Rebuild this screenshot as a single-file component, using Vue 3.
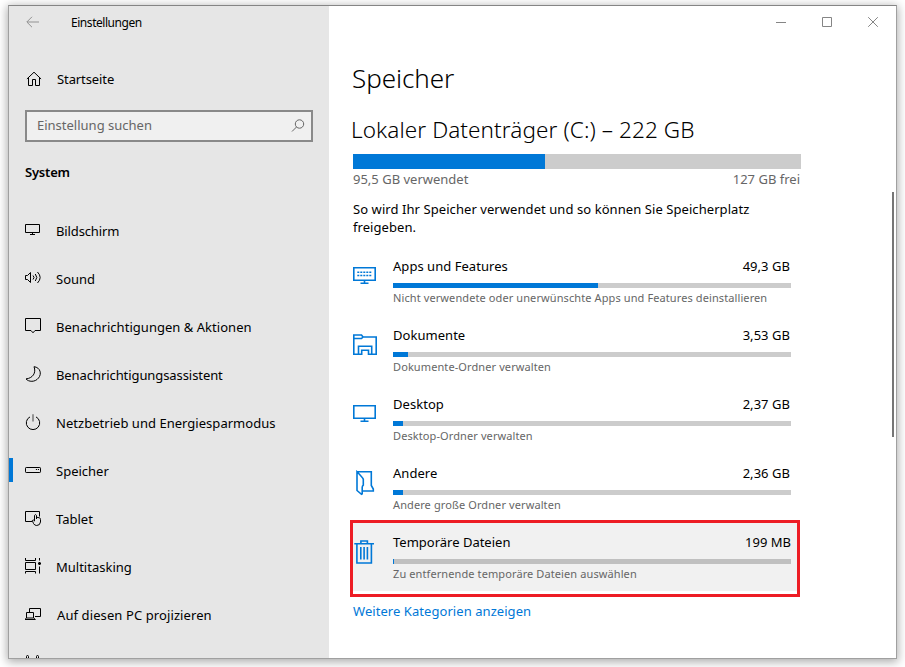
<script setup>
const nav = [
  { id: 'display', label: 'Bildschirm' },
  { id: 'sound', label: 'Sound' },
  { id: 'message', label: 'Benachrichtigungen & Aktionen' },
  { id: 'moon', label: 'Benachrichtigungsassistent' },
  { id: 'power', label: 'Netzbetrieb und Energiesparmodus' },
  { id: 'drive', label: 'Speicher', active: true },
  { id: 'tablet', label: 'Tablet' },
  { id: 'tasks', label: 'Multitasking' },
  { id: 'project', label: 'Auf diesen PC projizieren' },
  { id: 'share', label: '' },
]

const categories = [
  { id: 'apps', name: 'Apps und Features', size: '49,3 GB', used: 205, hint: 'Nicht verwendete oder unerwünschte Apps und Features deinstallieren' },
  { id: 'docs', name: 'Dokumente', size: '3,53 GB', used: 15, hint: 'Dokumente-Ordner verwalten' },
  { id: 'desktop', name: 'Desktop', size: '2,37 GB', used: 10, hint: 'Desktop-Ordner verwalten' },
  { id: 'other', name: 'Andere', size: '2,36 GB', used: 10, hint: 'Andere große Ordner verwalten' },
  { id: 'temp', name: 'Temporäre Dateien', size: '199 MB', used: 1, hint: 'Zu entfernende temporäre Dateien auswählen', marked: true },
]
</script>

<template>
  <div class="desktop">
    <div class="window">
      <aside class="sidebar">
        <header class="titlebar">
          <svg class="back" width="14" height="12" viewBox="0 0 14 12"><path d="M13 6H1M6 .8L.8 6L6 11.2" /></svg>
          <span class="apptitle">Einstellungen</span>
        </header>
        <div class="home">
          <svg width="16" height="16" viewBox="0 0 16 16"><path d="M.9 8L8 1.2L15.1 8M2.5 6.5V14.5H6.5V8.5H9.5V14.5H13.5V6.5" /></svg>
          <span>Startseite</span>
        </div>
        <div class="search">
          <span>Einstellung suchen</span>
          <svg width="14" height="14" viewBox="0 0 14 14"><circle cx="8.5" cy="5" r="4.2" /><path d="M5.5 8L1 12.5" /></svg>
        </div>
        <h3>System</h3>
        <nav>
          <div v-for="n in nav" :key="n.id" class="item" :class="{ active: n.active }">
            <svg width="18" height="18" viewBox="0 0 18 18">
              <template v-if="n.id === 'display'"><path d="M.5 2.5H14.5V10.5H.5zM7.5 10.5V12.5M5 12.5H10" /></template>
              <template v-else-if="n.id === 'sound'"><path d="M.5 5.5H2.5L5.5 2.5V12.5L2.5 9.5H.5z" /><path d="M8 5.5Q10 7.5 8 9.5M10.3 4Q13.3 7.5 10.3 11M12.5 2Q17.8 7.5 12.5 13" /></template>
              <template v-else-if="n.id === 'message'"><path d="M.5 .5H15.5V12.5H10L8 14.8L6 12.5H.5z" /></template>
              <template v-else-if="n.id === 'moon'"><path d="M9 .7C15.4 1.4 17 8 13.5 12C10 16.5 3.5 16 1 12.9C7.5 12.3 11.5 7 9 .7z" /></template>
              <template v-else-if="n.id === 'power'"><path d="M5 2.9A6.7 6.7 0 1 0 11 2.9" /><path class="grey" d="M8 .2V7.5" /></template>
              <template v-else-if="n.id === 'drive'"><rect x=".5" y="5.5" width="15" height="5" rx=".7" /><path d="M10.9 7.5H12M12.9 7.5H14" /></template>
              <template v-else-if="n.id === 'tablet'"><path d="M7 11.5H.5V1.5H14.5V6.5M9.5 11V5.4Q10.5 3.8 11.5 5.4V9M11.5 7.2L14.3 7.8Q15.5 8 15.5 9.5V12Q15 15.5 11.7 15.5Q9.5 15.5 8.5 13.5L7.3 10.5Q8.5 9.3 9.5 11" /></template>
              <template v-else-if="n.id === 'tasks'"><path d="M.5 0V2.5H10.5V0M.5 4.5H10.5V11.5H.5zM.5 15.5V13.5H10.5V15.5M14.5 0V2.5M14.5 8.5V15.5M13 5.5H16M13.5 4.5H15.5M13.5 6.5H15.5" /></template>
              <template v-else-if="n.id === 'project'"><path d="M4.5 6V2.5H15.5V10.5H10M1.5 6.5H8.5V12H1.5zM0 13.5H10.5M1 12L.5 13.5M9 12L10 13.5" /></template>
              <template v-else><path d="M1.5 6V2.5Q1.5 1.5 2.5 1.5Q3.5 1.5 3.5 2.5V6M11.5 6V2.5Q11.5 1.5 12.5 1.5Q13.5 1.5 13.5 2.5V6" /></template>
            </svg>
            <span :class="n.id">{{ n.label }}</span>
          </div>
        </nav>
      </aside>

      <main>
        <div class="controls">
          <svg width="102" height="12" viewBox="0 0 102 12"><path d="M0 6.5H10M46.5 1.5H55.5V10.5H46.5z" /><path d="M92.2 1.2L101.8 10.8M101.8 1.2L92.2 10.8" /></svg>
        </div>
        <h1>Speicher</h1>
        <h2>Lokaler Datenträger (C:) – 222 GB</h2>
        <div class="total"><div class="totalused"></div></div>
        <div class="legend"><span>95,5 GB verwendet</span><span>127 GB frei</span></div>
        <p>So wird Ihr Speicher verwendet und so können Sie Speicherplatz freigeben.</p>
        <section>
          <div v-for="c in categories" :key="c.id" class="cat" :class="{ marked: c.marked }">
            <svg width="26" height="28" viewBox="0 0 26 28">
              <template v-if="c.id === 'apps'"><path d="M.8 4.8H22.2V17.2H.8zM11.5 17V20M7.5 20.2H15.5" /><path class="keys" d="M4.3 9.3H18.5M4.3 12.5H18.5" /></template>
              <template v-else-if="c.id === 'docs'"><path d="M.8 6.5V22.2H5.5V14.3H18.7V22.2H23.2V5H10L8.5 3H.8V6.5H8.5L10 5M5.5 22.2H8.7V18.3H15.5V22.2H18.7" /></template>
              <template v-else-if="c.id === 'desktop'"><path d="M.8 4.8H22.2V17.2H.8zM11.5 17V20M7.5 20.2H15.5" /></template>
              <template v-else-if="c.id === 'other'"><path d="M4 1.8H18.3V15.5L20.3 19V21H10M4 1.8V20.5L8.5 24.3L9.2 23.8V17.5Q9.2 16 10.3 15.2V9.3Q10 8 4 1.8z" /></template>
              <template v-else><path d="M1.3 4.8H21M3.9 4.8V24H18.4V4.8M7.9 4.5V2H14.4V4.5M7.8 8V20.5M11.1 8V20.5M14.4 8V20.5" /></template>
            </svg>
            <div class="info">
              <div class="line"><span>{{ c.name }}</span><span class="size">{{ c.size }}</span></div>
              <div class="bar"><div class="fill" :style="{ width: c.used + 'px' }"></div></div>
              <div class="hint">{{ c.hint }}</div>
            </div>
          </div>
        </section>
        <a>Weitere Kategorien anzeigen</a>
        <div class="scroll"></div>
      </main>
    </div>
  </div>
</template>

<style>
body { margin: 0; background: #fff; overflow: hidden; }
</style>

<style scoped>
* { box-sizing: border-box; }
.desktop { width: 905px; height: 667px; padding: 5px 8px 8px; overflow: hidden; font: 13px/18px "Noto Sans", "Open Sans", sans-serif; color: #000; }
.window { width: 889px; height: 654px; display: flex; overflow: hidden; border: 1px solid #a0a0a0; border-top-color: #858585; background: #fff; box-shadow: 0 2px 9px 1px rgba(0, 0, 0, .33); }
svg { display: block; fill: none; stroke: #000; stroke-width: 1; flex: none; }
span, h1, h2, a { white-space: nowrap; }

.sidebar { width: 320px; flex: none; background: #e6e6e6; height: 652px; overflow: hidden; }
.titlebar { height: 33px; display: flex; align-items: center; padding-left: 17px; gap: 31px; }
.back { stroke: #929292; margin-top: -1px; }
.apptitle { font-size: 12px; letter-spacing: -.45px; }
.home { height: 32px; margin-top: 24px; padding-left: 17px; display: flex; align-items: center; gap: 15px; }
.home span { letter-spacing: -.1px; }
.search { width: 288px; height: 32px; margin: 15px 0 0 16px; border: 2px solid #898989; background: #f0f0f0; padding: 0 6px 2px 10px; display: flex; align-items: center; justify-content: space-between; color: #666; }
.search svg { stroke: #666; margin-top: 2px; }
h3 { margin: 20px 0 0 16px; font-size: 13px; line-height: 20px; font-weight: 600; letter-spacing: -.2px; }
nav { margin-top: 25px; }
.item { height: 48px; padding-left: 16px; display: flex; align-items: center; gap: 13px; }
.item.active { padding-left: 0; }
.item.active::before { content: ""; width: 4px; height: 24px; background: #0078d7; margin: 0 -1px 2px 0; }
.item .display { letter-spacing: -.13px; }
.item .message { letter-spacing: .03px; }
.item .moon { letter-spacing: -.08px; }
.item .power { letter-spacing: .03px; }
.item .project { letter-spacing: .1px; margin-left: 1px; }
.grey { stroke: #777; stroke-width: 1.5; }

main { flex: 1; position: relative; padding-left: 24px; }
.controls { height: 33px; padding: 10px 0 0 423px; }
.controls svg { stroke: #858585; }
h1 { margin: 21px 0 0 -1px; font-size: 26px; line-height: 36px; font-weight: 350; letter-spacing: -.05px; }
h2 { margin: 19px 0 0 -2px; font-size: 22.5px; line-height: 30px; font-weight: 300; letter-spacing: .09px; }
.total { width: 448px; height: 15px; margin-top: 9px; background: #ccc; }
.totalused { width: 192px; height: 15px; background: #0078d7; }
.legend { width: 447px; display: flex; justify-content: space-between; line-height: 20px; color: #666; }
h1 { font-weight: 300; }
p { margin: 11px 0 0; width: 430px; line-height: 18px; letter-spacing: .07px; }
section { margin-top: 14px; }
.cat { width: 448px; height: 69px; display: flex; padding-top: 6px; }
.cat > svg { stroke: #0078d7; stroke-width: 1.6; margin: 7px 14px 0 0; }
.keys { stroke-dasharray: 2 1; }
.info { width: 398px; }
.line { display: flex; justify-content: space-between; height: 27px; line-height: 20px; }
.line span { letter-spacing: .04px; }
.line .size { margin-right: 1px; }
.bar { height: 5px; background: #ccc; }
.fill { height: 5px; background: #0078d7; }
.hint { font-size: 11px; line-height: 20px; letter-spacing: .1px; color: #666; white-space: nowrap; }
.marked { width: 450px; height: 77px; margin: -6px 0 0 -3px; padding-top: 9px; border: 3px solid #ed1c24; background: linear-gradient(#f1f1f1 68px, #fff 68px); }
.marked .bar { background: #c0c0c0; }
.marked .line span { letter-spacing: 0; }
.marked .line .size { margin-right: 0; }
a { display: block; margin-top: 4px; line-height: 20px; letter-spacing: .06px; color: #0078d7; }
.scroll { position: absolute; left: 563px; top: 186px; width: 2px; height: 245px; background: #767676; }
</style>
